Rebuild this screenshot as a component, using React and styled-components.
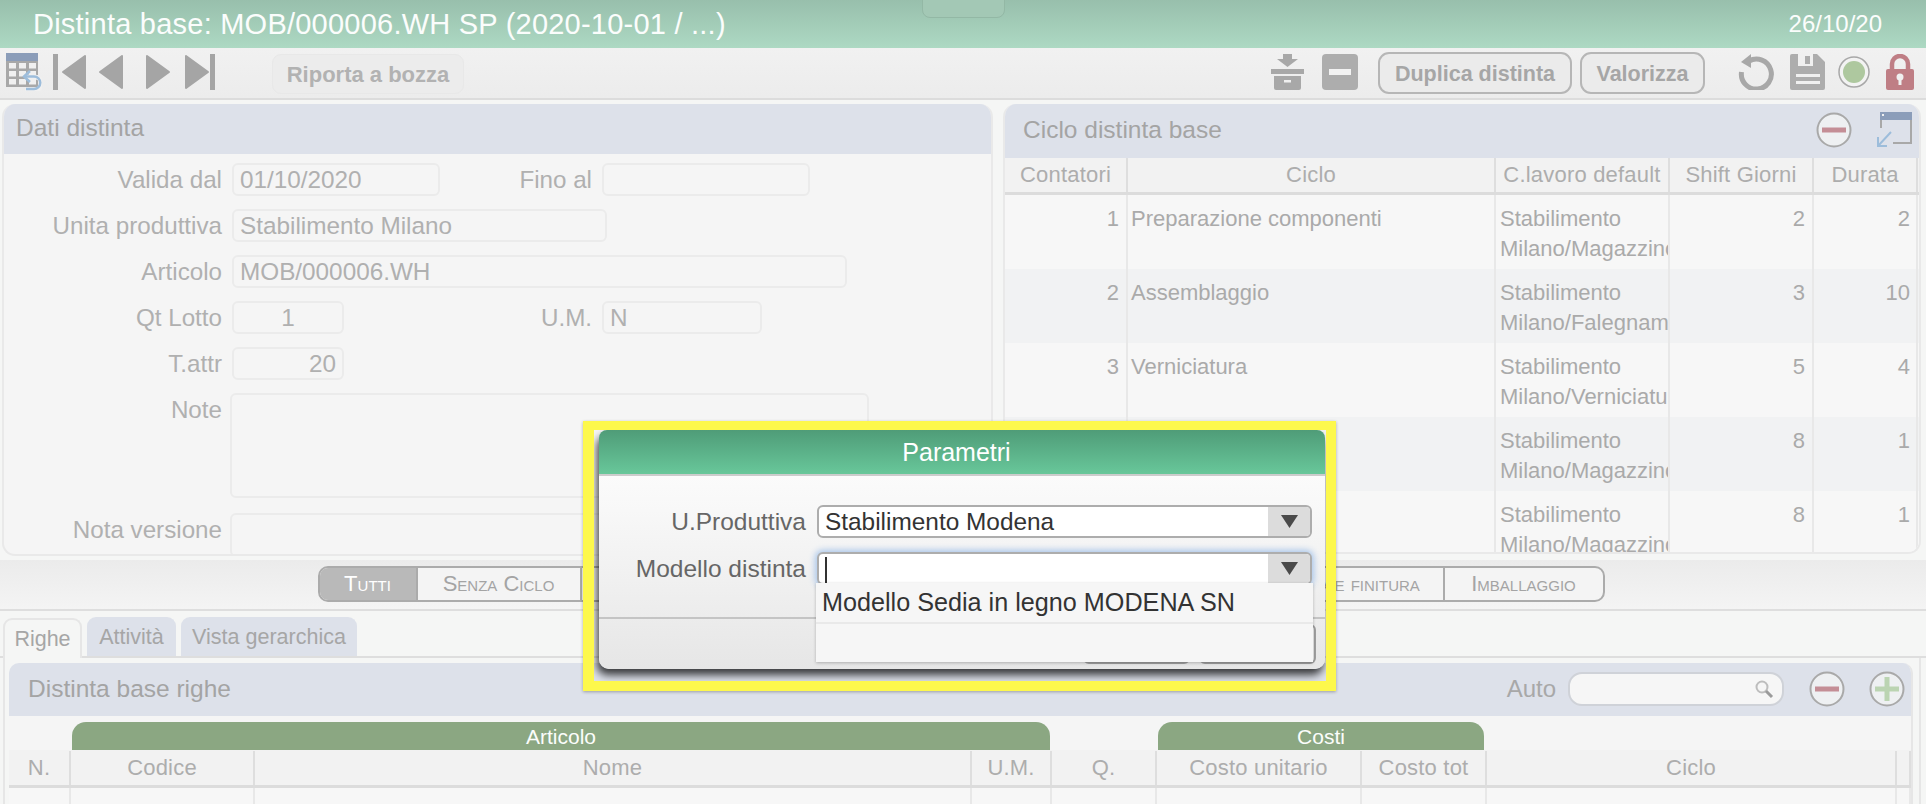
import React from "react";
import styled, { createGlobalStyle } from "styled-components";

const Global = createGlobalStyle`
  html, body { margin: 0; padding: 0; height: 804px; overflow: hidden; background: #f5f6f5; }
  * { box-sizing: border-box; }
  body { font-family: "Liberation Sans", Arial, sans-serif; }
`;

const Page = styled.div`
  position: relative;
  width: 1926px;
  height: 804px;
  overflow: hidden;
  display: flex;
  flex-direction: column;
  background: #f5f6f5;
`;

const Header = styled.header`
  height: 48px;
  flex: none;
  padding: 0 44px 0 33px;
  display: flex;
  align-items: center;
  justify-content: space-between;
  color: #fbfdfc;
  background: linear-gradient(#98bfac, #add9c3);
`;
const HeaderTitle = styled.div`
  font-size: 29px;
  letter-spacing: 0.23px;
`;
const HeaderDate = styled.div`
  font-size: 24px;
`;
const Handle = styled.div`
  position: absolute;
  left: 922px;
  top: -2px;
  width: 83px;
  height: 20px;
  border: 1px solid #93b8a5;
  border-radius: 0 0 8px 8px;
  background: #a3c8b5;
`;

const Toolbar = styled.div`
  height: 52px;
  flex: none;
  display: flex;
  align-items: center;
  padding: 0 12px 2px 6px;
  background: linear-gradient(#f1f1f1, #ececec);
  border-bottom: 2px solid #dcdcdc;
`;
const IconSlot = styled.div`
  flex: none;
  display: flex;
  align-items: center;
  margin-left: ${(p) => p.$ml || 0}px;
`;
const GhostButton = styled.div`
  flex: none;
  height: 40px;
  width: 192px;
  margin: 3px 0 0 57px;
  padding-top: 2px;
  display: flex;
  align-items: center;
  justify-content: center;
  border-radius: 9px;
  background: #ececec;
  border: 1px solid #e8e8e8;
  color: #b2b2b2;
  font-weight: 700;
  font-size: 22px;
`;
const ActionButton = styled.div`
  flex: none;
  height: 42px;
  width: ${(p) => p.$w}px;
  margin: 2px 0 0 ${(p) => p.$ml}px;
  padding-top: 2px;
  display: flex;
  align-items: center;
  justify-content: center;
  border: 2px solid #b6b6b6;
  border-radius: 11px;
  background: #ebebeb;
  color: #a6a6a6;
  font-weight: 700;
  font-size: 21.5px;
`;
const Spacer = styled.div`
  flex: 1;
`;

const PanelsRow = styled.div`
  height: 460px;
  flex: none;
  display: flex;
  gap: 10px;
  padding: 4px 5px 0 2px;
`;
const Panel = styled.section`
  flex: ${(p) => (p.$w ? `0 0 ${p.$w}px` : 1)};
  height: ${(p) => p.$h}px;
  border: 2px solid #e9e9e9;
  border-top: 0;
  border-radius: 13px;
  background: #f5f5f5;
  overflow: hidden;
`;
const PanelHead = styled.div`
  height: ${(p) => p.$h}px;
  padding: 0 ${(p) => p.$pr || 8}px 2px ${(p) => p.$pl}px;
  display: flex;
  align-items: center;
  justify-content: space-between;
  background: #dde1ea;
  color: #a4a4a4;
  font-size: 24.5px;
`;
const HeadIcons = styled.div`
  display: flex;
  align-items: center;
`;

const Form = styled.div`
  padding-top: 9px;
`;
const FormRow = styled.div`
  display: flex;
  height: ${(p) => p.$h || 46}px;
  margin-bottom: ${(p) => p.$mb || 0}px;
`;
const FormLabel = styled.div`
  flex: none;
  width: ${(p) => p.$w}px;
  height: 33px;
  line-height: 33px;
  text-align: right;
  font-size: 24.2px;
  color: #b0b0b0;
  padding-right: ${(p) => p.$pr || 10}px;
`;
const Field = styled.div`
  flex: none;
  width: ${(p) => p.$w}px;
  height: ${(p) => p.$h || 33}px;
  line-height: 29px;
  padding: 0 6px;
  border: 2px solid #ebebeb;
  border-radius: 6px;
  background: #f5f5f5;
  color: #b0b0b0;
  font-size: 24.3px;
  text-align: ${(p) => p.$align || "left"};
`;

const GridTable = styled.div`
  font-size: 22px;
  color: #aaaaaa;
`;
const GridHead = styled.div`
  display: grid;
  grid-template-columns: ${(p) => p.$cols};
  height: ${(p) => p.$h}px;
  padding-top: ${(p) => p.$pt || 0}px;
  background: #f2f2f2;
  border-bottom: 3px solid #dcdcdc;
  letter-spacing: 0.2px;
`;
const HeadCell = styled.div`
  display: flex;
  align-items: center;
  justify-content: center;
  white-space: nowrap;
  overflow: hidden;
  border-right: 2px solid #dedede;
  color: #adadad;
`;
const GridRow = styled.div`
  display: grid;
  grid-template-columns: ${(p) => p.$cols};
  height: ${(p) => p.$h}px;
  background: ${(p) => (p.$alt ? "#f1f2f3" : "#f7f7f7")};
`;
const Cell = styled.div`
  padding: 9px ${(p) => p.$pr || 4}px 0 ${(p) => p.$pl || 3}px;
  line-height: 30px;
  overflow: hidden;
  text-align: ${(p) => (p.$num ? "right" : "left")};
  border-right: 2px solid #e8e8e8;
`;

const FilterBar = styled.div`
  height: 51px;
  flex: none;
  display: flex;
  justify-content: center;
  padding: 6px 4px 0 0;
  background: linear-gradient(#ebebeb, #f4f4f4);
  border-bottom: 2px solid #dedede;
`;
const Segments = styled.div`
  display: flex;
  height: 36px;
  border: 2px solid #ababab;
  border-radius: 10px;
  overflow: hidden;
  background: #f4f4f4;
`;
const Segment = styled.div`
  width: ${(p) => p.$w}px;
  display: flex;
  align-items: center;
  justify-content: center;
  font-size: 22px;
  font-variant: small-caps;
  white-space: nowrap;
  color: ${(p) => (p.$on ? "#ffffff" : "#a4a4a4")};
  background: ${(p) => (p.$on ? "#b9b9b9" : "transparent")};
  & + & {
    border-left: 2px solid #ababab;
  }
`;

const Tabs = styled.div`
  height: 47px;
  flex: none;
  display: flex;
  gap: 5px;
  align-items: flex-end;
  padding: 0 5px 0 3px;
  border-bottom: 2px solid #dedede;
`;
const Tab = styled.div`
  width: ${(p) => p.$w}px;
  height: ${(p) => (p.$on ? 40 : 39)}px;
  margin-bottom: ${(p) => (p.$on ? -2 : 0)}px;
  display: flex;
  align-items: center;
  justify-content: center;
  border: 2px solid ${(p) => (p.$on ? "#e6e6e6" : "#dde1ea")};
  border-bottom: 0;
  border-radius: 9px 9px 0 0;
  background: ${(p) => (p.$on ? "#f5f6f5" : "#dde1ea")};
  color: #a6a6a6;
  font-size: 21.5px;
`;
const TabBody = styled.div`
  flex: 1;
  margin: 0 5px 0 3px;
  padding: 5px 6px 0 4px;
  border: 2px solid #e6e6e6;
  border-top: 0;
  border-bottom: 0;
  min-height: 0;
`;
const InnerPanel = styled.div`
  height: 100%;
  border-radius: 10px 10px 0 0;
  overflow: hidden;
  border-right: 2px solid #e6e6e6;
`;
const SearchGroup = styled.div`
  display: flex;
  align-items: center;
`;
const SearchLabel = styled.div`
  font-size: 24px;
  color: #a8a8a8;
  margin-right: 12px;
`;
const SearchBox = styled.div`
  width: 216px;
  height: 34px;
  border: 2px solid #cfd2d8;
  border-radius: 14px;
  background: #f6f6f6;
  display: flex;
  align-items: center;
  justify-content: flex-end;
  padding-right: 8px;
`;
const GroupRow = styled.div`
  height: 34px;
  display: flex;
  align-items: flex-end;
  padding-left: 63px;
  background: #f5f5f5;
`;
const GroupHead = styled.div`
  width: ${(p) => p.$w}px;
  margin-left: ${(p) => p.$ml || 0}px;
  height: 28px;
  padding-top: 2px;
  border-radius: 14px 14px 0 0;
  background: #8ba782;
  color: #fbfdfb;
  font-size: 21px;
  display: flex;
  align-items: center;
  justify-content: center;
`;

const Frame = styled.div`
  position: absolute;
  left: 583px;
  top: 421px;
  width: 753px;
  height: 270px;
  border: solid #fdf84c;
  border-width: 9px 10px 10px 11px;
  padding: 0 1px 0 5px;
  overflow: hidden;
  box-shadow: 0 1px 3px rgba(0, 0, 0, 0.3);
`;
const Dialog = styled.div`
  height: 239px;
  display: flex;
  flex-direction: column;
  border-radius: 10px;
  box-shadow: -2px 6px 9px rgba(0, 0, 0, 0.75);
  background: linear-gradient(#ffffff 0, #f8f8f8 80px, #e6e6e6 100%);
`;
const DialogTitle = styled.div`
  height: 46px;
  flex: none;
  display: flex;
  align-items: center;
  justify-content: center;
  padding: 0 11px 0 0;
  color: #ffffff;
  font-size: 25px;
  border-radius: 8px 8px 0 0;
  border-bottom: 2px solid #cccccc;
  background: linear-gradient(#4f9c78, #68c79a);
`;
const DialogBody = styled.div`
  flex: none;
  height: 143px;
  padding-top: 29px;
  display: flex;
  flex-direction: column;
  gap: 14px;
  border-bottom: 2px solid #c4c4c4;
`;
const DialogRow = styled.div`
  display: flex;
  align-items: center;
`;
const DialogLabel = styled.div`
  width: 207px;
  margin-right: 11px;
  text-align: right;
  font-size: 24.5px;
  color: #666666;
`;
const Select = styled.div`
  position: relative;
  width: 495px;
  height: 33px;
  display: flex;
  align-items: center;
  border: 2px solid #adadad;
  border-radius: 6px;
  background: #ffffff;
  box-shadow: ${(p) => (p.$focus ? "0 0 6px 2px #a9c6ea" : "none")};
`;
const SelectValue = styled.div`
  flex: 1;
  padding-left: 6px;
  font-size: 24.4px;
  color: #333333;
  line-height: 29px;
`;
const Caret = styled.div`
  width: 1.5px;
  height: 26px;
  margin-top: 2px;
  background: #333333;
`;
const SelectArrow = styled.div`
  flex: none;
  width: 42px;
  height: 100%;
  display: flex;
  align-items: center;
  justify-content: center;
  border-radius: 0 4px 4px 0;
  background: #dcdcdc;
`;
const Dropdown = styled.div`
  position: absolute;
  left: -3px;
  right: -3px;
  top: 100%;
  z-index: 2;
  background: #f6f6f6;
  box-shadow: 0 1px 3px rgba(0, 0, 0, 0.25);
`;
const DropItem = styled.div`
  height: ${(p) => p.$h}px;
  padding-left: 6px;
  line-height: 39px;
  font-size: 25.2px;
  color: #333333;
  border-bottom: ${(p) => (p.$sep ? "2px solid #e9e9e9" : "0")};
`;
const DialogFooter = styled.div`
  flex: 1;
  display: flex;
  justify-content: flex-end;
  gap: 9px;
  padding: 5px 9px 0 0;
`;
const FooterButton = styled.div`
  width: ${(p) => p.$w}px;
  height: 40px;
  border: 2px solid #9e9e9e;
  border-radius: 6px;
  background: #ededed;
`;

const Tri = ({ dir = "left", x = 0 }) => (
  <svg width="26" height="38" viewBox="0 0 26 38" style={{ marginLeft: x }}>
    <path
      d={dir === "left" ? "M24 3 L2 19 L24 35 Z" : "M2 3 L24 19 L2 35 Z"}
      fill="#a5a5a5"
      stroke="#a5a5a5"
      strokeWidth="2"
      strokeLinejoin="round"
    />
  </svg>
);
const VBar = () => <svg width="5" height="36"><rect width="5" height="36" fill="#a5a5a5" /></svg>;

const TableBack = () => (
  <svg width="36" height="38" viewBox="0 0 36 38">
    <rect x="0" y="0" width="32" height="8" fill="#8b9db9" />
    <rect x="0" y="8" width="32" height="26" fill="#a8a8a8" />
    {[0, 1, 2].map((r) =>
      [0, 1, 2].map((c) => <rect key={`${r}${c}`} x={3 + c * 10} y={10 + r * 8} width="7" height="5.5" fill="#f0f0f0" />)
    )}
    <path d="M20 24 H29 a6 6 0 0 1 0 13 H19" fill="none" stroke="#f0f0f0" strokeWidth="5" />
    <path d="M24 18 L18 23.5 L24 29" fill="none" stroke="#9dbddb" strokeWidth="2.5" />
    <path d="M19 23.5 H28 a6 6 0 0 1 0 12.5 H20" fill="none" stroke="#9dbddb" strokeWidth="2.5" />
  </svg>
);
const Archive = () => (
  <svg width="33" height="36" viewBox="0 0 33 36">
    <path d="M12 0 H21 V5 H27 L16.5 13 L6 5 H12 Z" fill="#a8a8a8" />
    <rect x="0" y="15" width="33" height="5" fill="#a8a8a8" />
    <path d="M3 22 H30 V34 a2 2 0 0 1 -2 2 H5 a2 2 0 0 1 -2 -2 Z" fill="#a8a8a8" />
    <rect x="13" y="26" width="7" height="2.5" fill="#f0f0f0" />
  </svg>
);
const MinusSquare = () => (
  <svg width="36" height="36" viewBox="0 0 36 36">
    <rect width="36" height="36" rx="4" fill="#adadad" />
    <rect x="7" y="15" width="22" height="6" fill="#f2f2f2" />
  </svg>
);
const Refresh = () => (
  <svg width="36" height="36" viewBox="0 0 36 36">
    <path d="M11 7 A15 15 0 1 1 3.5 18" fill="none" stroke="#a8a8a8" strokeWidth="5" />
    <path d="M13 0 L13 14 L3 8 Z" fill="#a8a8a8" />
  </svg>
);
const Floppy = () => (
  <svg width="35" height="36" viewBox="0 0 35 36">
    <path d="M2 0 H27 L35 8 V34 a2 2 0 0 1 -2 2 H2 a2 2 0 0 1 -2 -2 V2 a2 2 0 0 1 2 -2 Z" fill="#adadad" />
    <rect x="8" y="0" width="15" height="12" fill="#f0f0f0" />
    <rect x="15" y="2" width="5" height="8" fill="#adadad" />
    <rect x="6" y="20" width="24" height="3" fill="#f0f0f0" />
    <rect x="6" y="27" width="24" height="3" fill="#f0f0f0" />
  </svg>
);
const StatusDot = () => (
  <svg width="32" height="32" viewBox="0 0 32 32">
    <circle cx="16" cy="16" r="15" fill="#f3f3f3" stroke="#a8a8a8" strokeWidth="1.5" />
    <circle cx="16" cy="16" r="11" fill="#aec89f" />
  </svg>
);
const Lock = () => (
  <svg width="28" height="36" viewBox="0 0 28 36">
    <path d="M6 16 V10 a8 8 0 0 1 16 0 V16" fill="none" stroke="#bf7e85" strokeWidth="4.5" />
    <rect x="0" y="15" width="28" height="21" rx="2" fill="#bf7e85" />
    <circle cx="14" cy="23" r="3.5" fill="#f0f0f0" />
    <rect x="12.5" y="24" width="3" height="7" fill="#f0f0f0" />
  </svg>
);
const RoundIcon = ({ plus }) => (
  <svg width="36" height="36" viewBox="0 0 36 36">
    <circle cx="18" cy="18" r="16.5" fill="#eef0f2" stroke="#a9a9a9" strokeWidth="2" />
    {plus ? (
      <path d="M6 18 H30 M18 6 V30" stroke="#bbd4b2" strokeWidth="5" fill="none" />
    ) : (
      <rect x="6" y="15.5" width="24" height="5" fill="#c48e96" />
    )}
  </svg>
);
const WindowIcon = () => (
  <svg width="36" height="36" viewBox="0 0 36 36">
    <rect x="5" y="1" width="30" height="30" fill="none" stroke="#a8a8a8" strokeWidth="2" />
    <rect x="4" y="0" width="32" height="8" fill="#8b9db9" />
    <rect x="6" y="2" width="2" height="2" fill="#f0f0f0" />
    <rect x="0" y="16" width="17" height="20" fill="#dde1ea" />
    <path d="M15 20 L2 34 M2 25 V34 H11" fill="none" stroke="#9dbddb" strokeWidth="2" />
  </svg>
);
const Magnifier = () => (
  <svg width="20" height="20" viewBox="0 0 20 20">
    <circle cx="8" cy="8" r="5.5" fill="#f6f6f6" stroke="#bdbdbd" strokeWidth="2" />
    <path d="M12 12 L18 18" stroke="#9b9b9b" strokeWidth="3" />
  </svg>
);
const DownTri = () => (
  <svg width="17" height="13" viewBox="0 0 17 13">
    <path d="M0 0 H17 L8.5 13 Z" fill="#4a4a4a" />
  </svg>
);

const cycleCols = "123px 368px 174px 144px 104px 1fr";
const cycleRows = [
  ["1", "Preparazione componenti", "Stabilimento Milano/Magazzino", "2", "2"],
  ["2", "Assemblaggio", "Stabilimento Milano/Falegnameria", "3", "10"],
  ["3", "Verniciatura", "Stabilimento Milano/Verniciatura", "5", "4"],
  ["4", "Imballaggio", "Stabilimento Milano/Magazzino", "8", "1"],
  ["5", "Spedizione", "Stabilimento Milano/Magazzino", "8", "1"],
];
const lineCols = "62px 184px 717px 80px 105px 205px 125px 410px 1fr";
const lineHeads = ["N.", "Codice", "Nome", "U.M.", "Q.", "Costo unitario", "Costo tot", "Ciclo", ""];

export default function App() {
  return (
    <Page>
      <Global />
      <Header>
        <HeaderTitle>Distinta base: MOB/000006.WH SP (2020-10-01 / ...)</HeaderTitle>
        <HeaderDate>26/10/20</HeaderDate>
      </Header>
      <Handle />
      <Toolbar>
        <TableBack />
        <IconSlot $ml={11}><VBar /><Tri dir="left" x={3} /></IconSlot>
        <IconSlot $ml={11}><Tri dir="left" /></IconSlot>
        <IconSlot $ml={21}><Tri dir="right" /></IconSlot>
        <IconSlot $ml={13}><Tri dir="right" /><VBar /></IconSlot>
        <GhostButton>Riporta a bozza</GhostButton>
        <Spacer />
        <IconSlot><Archive /></IconSlot>
        <IconSlot $ml={18}><MinusSquare /></IconSlot>
        <ActionButton $w={194} $ml={20}>Duplica distinta</ActionButton>
        <ActionButton $w={125} $ml={8}>Valorizza</ActionButton>
        <IconSlot $ml={33}><Refresh /></IconSlot>
        <IconSlot $ml={16}><Floppy /></IconSlot>
        <IconSlot $ml={13}><StatusDot /></IconSlot>
        <IconSlot $ml={16}><Lock /></IconSlot>
      </Toolbar>
      <PanelsRow>
        <Panel $w={991} $h={452}>
          <PanelHead $h={50} $pl={12}>Dati distinta</PanelHead>
          <Form>
            <FormRow>
              <FormLabel $w={228}>Valida dal</FormLabel>
              <Field $w={208}>01/10/2020</Field>
              <FormLabel $w={162}>Fino al</FormLabel>
              <Field $w={208} />
            </FormRow>
            <FormRow>
              <FormLabel $w={228}>Unita produttiva</FormLabel>
              <Field $w={375}>Stabilimento Milano</Field>
            </FormRow>
            <FormRow>
              <FormLabel $w={228}>Articolo</FormLabel>
              <Field $w={615}>MOB/000006.WH</Field>
            </FormRow>
            <FormRow>
              <FormLabel $w={228}>Qt Lotto</FormLabel>
              <Field $w={112} $align="center">1</Field>
              <FormLabel $w={258}>U.M.</FormLabel>
              <Field $w={160}>N</Field>
            </FormRow>
            <FormRow>
              <FormLabel $w={228}>T.attr</FormLabel>
              <Field $w={112} $align="right">20</Field>
            </FormRow>
            <FormRow $h={105} $mb={15}>
              <FormLabel $w={226} $pr={8}>Note</FormLabel>
              <Field $w={639} $h={105} />
            </FormRow>
            <FormRow $h={44}>
              <FormLabel $w={226} $pr={8}>Nota versione</FormLabel>
              <Field $w={639} $h={44} />
            </FormRow>
          </Form>
        </Panel>
        <Panel $h={450}>
          <PanelHead $h={54} $pl={18} $pr={7}>
            Ciclo distinta base
            <HeadIcons>
              <RoundIcon />
              <IconSlot $ml={24}><WindowIcon /></IconSlot>
            </HeadIcons>
          </PanelHead>
          <GridTable>
            <GridHead $cols={cycleCols} $h={37}>
              <HeadCell>Contatori</HeadCell>
              <HeadCell>Ciclo</HeadCell>
              <HeadCell>C.lavoro default</HeadCell>
              <HeadCell>Shift Giorni</HeadCell>
              <HeadCell>Durata</HeadCell>
              <div />
            </GridHead>
            {cycleRows.map((r, i) => (
              <GridRow key={r[0]} $cols={cycleCols} $h={74} $alt={i % 2 === 1}>
                <Cell $num $pr={7}>{r[0]}</Cell>
                <Cell>{r[1]}</Cell>
                <Cell $pl={4}>{r[2]}</Cell>
                <Cell $num $pr={7}>{r[3]}</Cell>
                <Cell $num $pr={6}>{r[4]}</Cell>
                <div />
              </GridRow>
            ))}
          </GridTable>
        </Panel>
      </PanelsRow>
      <FilterBar>
        <Segments>
          <Segment $w={96} $on>Tutti</Segment>
          <Segment $w={164}>Senza Ciclo</Segment>
          <Segment $w={332}>Preparazione componenti</Segment>
          <Segment $w={277}>Assemblaggio</Segment>
          <Segment $w={254}>Verniciatura e finitura</Segment>
          <Segment $w={160}>Imballaggio</Segment>
        </Segments>
      </FilterBar>
      <Tabs>
        <Tab $on $w={79}>Righe</Tab>
        <Tab $w={89}>Attività</Tab>
        <Tab $w={176}>Vista gerarchica</Tab>
      </Tabs>
      <TabBody>
        <InnerPanel>
          <PanelHead $h={53} $pl={19} $pr={6}>
            Distinta base righe
            <HeadIcons>
              <SearchGroup>
                <SearchLabel>Auto</SearchLabel>
                <SearchBox><Magnifier /></SearchBox>
              </SearchGroup>
              <IconSlot $ml={25}><RoundIcon /></IconSlot>
              <IconSlot $ml={24}><RoundIcon plus /></IconSlot>
            </HeadIcons>
          </PanelHead>
          <GroupRow>
            <GroupHead $w={978}>Articolo</GroupHead>
            <GroupHead $w={326} $ml={108}>Costi</GroupHead>
          </GroupRow>
          <GridTable>
            <GridHead $cols={lineCols} $h={38} $pt={1}>
              {lineHeads.map((h, i) => <HeadCell key={i}>{h}</HeadCell>)}
            </GridHead>
            <GridRow $cols={lineCols} $h={20}>
              {lineHeads.map((h, i) => <Cell key={i} />)}
            </GridRow>
          </GridTable>
        </InnerPanel>
      </TabBody>
      <Frame>
        <Dialog>
          <DialogTitle>Parametri</DialogTitle>
          <DialogBody>
            <DialogRow>
              <DialogLabel>U.Produttiva</DialogLabel>
              <Select>
                <SelectValue>Stabilimento Modena</SelectValue>
                <SelectArrow><DownTri /></SelectArrow>
              </Select>
            </DialogRow>
            <DialogRow>
              <DialogLabel>Modello distinta</DialogLabel>
              <Select $focus>
                <SelectValue><Caret /></SelectValue>
                <SelectArrow><DownTri /></SelectArrow>
                <Dropdown>
                  <DropItem $h={41} $sep>Modello Sedia in legno MODENA SN</DropItem>
                  <DropItem $h={38} />
                </Dropdown>
              </Select>
            </DialogRow>
          </DialogBody>
          <DialogFooter>
            <FooterButton $w={107} />
            <FooterButton $w={117} />
          </DialogFooter>
        </Dialog>
      </Frame>
    </Page>
  );
}
